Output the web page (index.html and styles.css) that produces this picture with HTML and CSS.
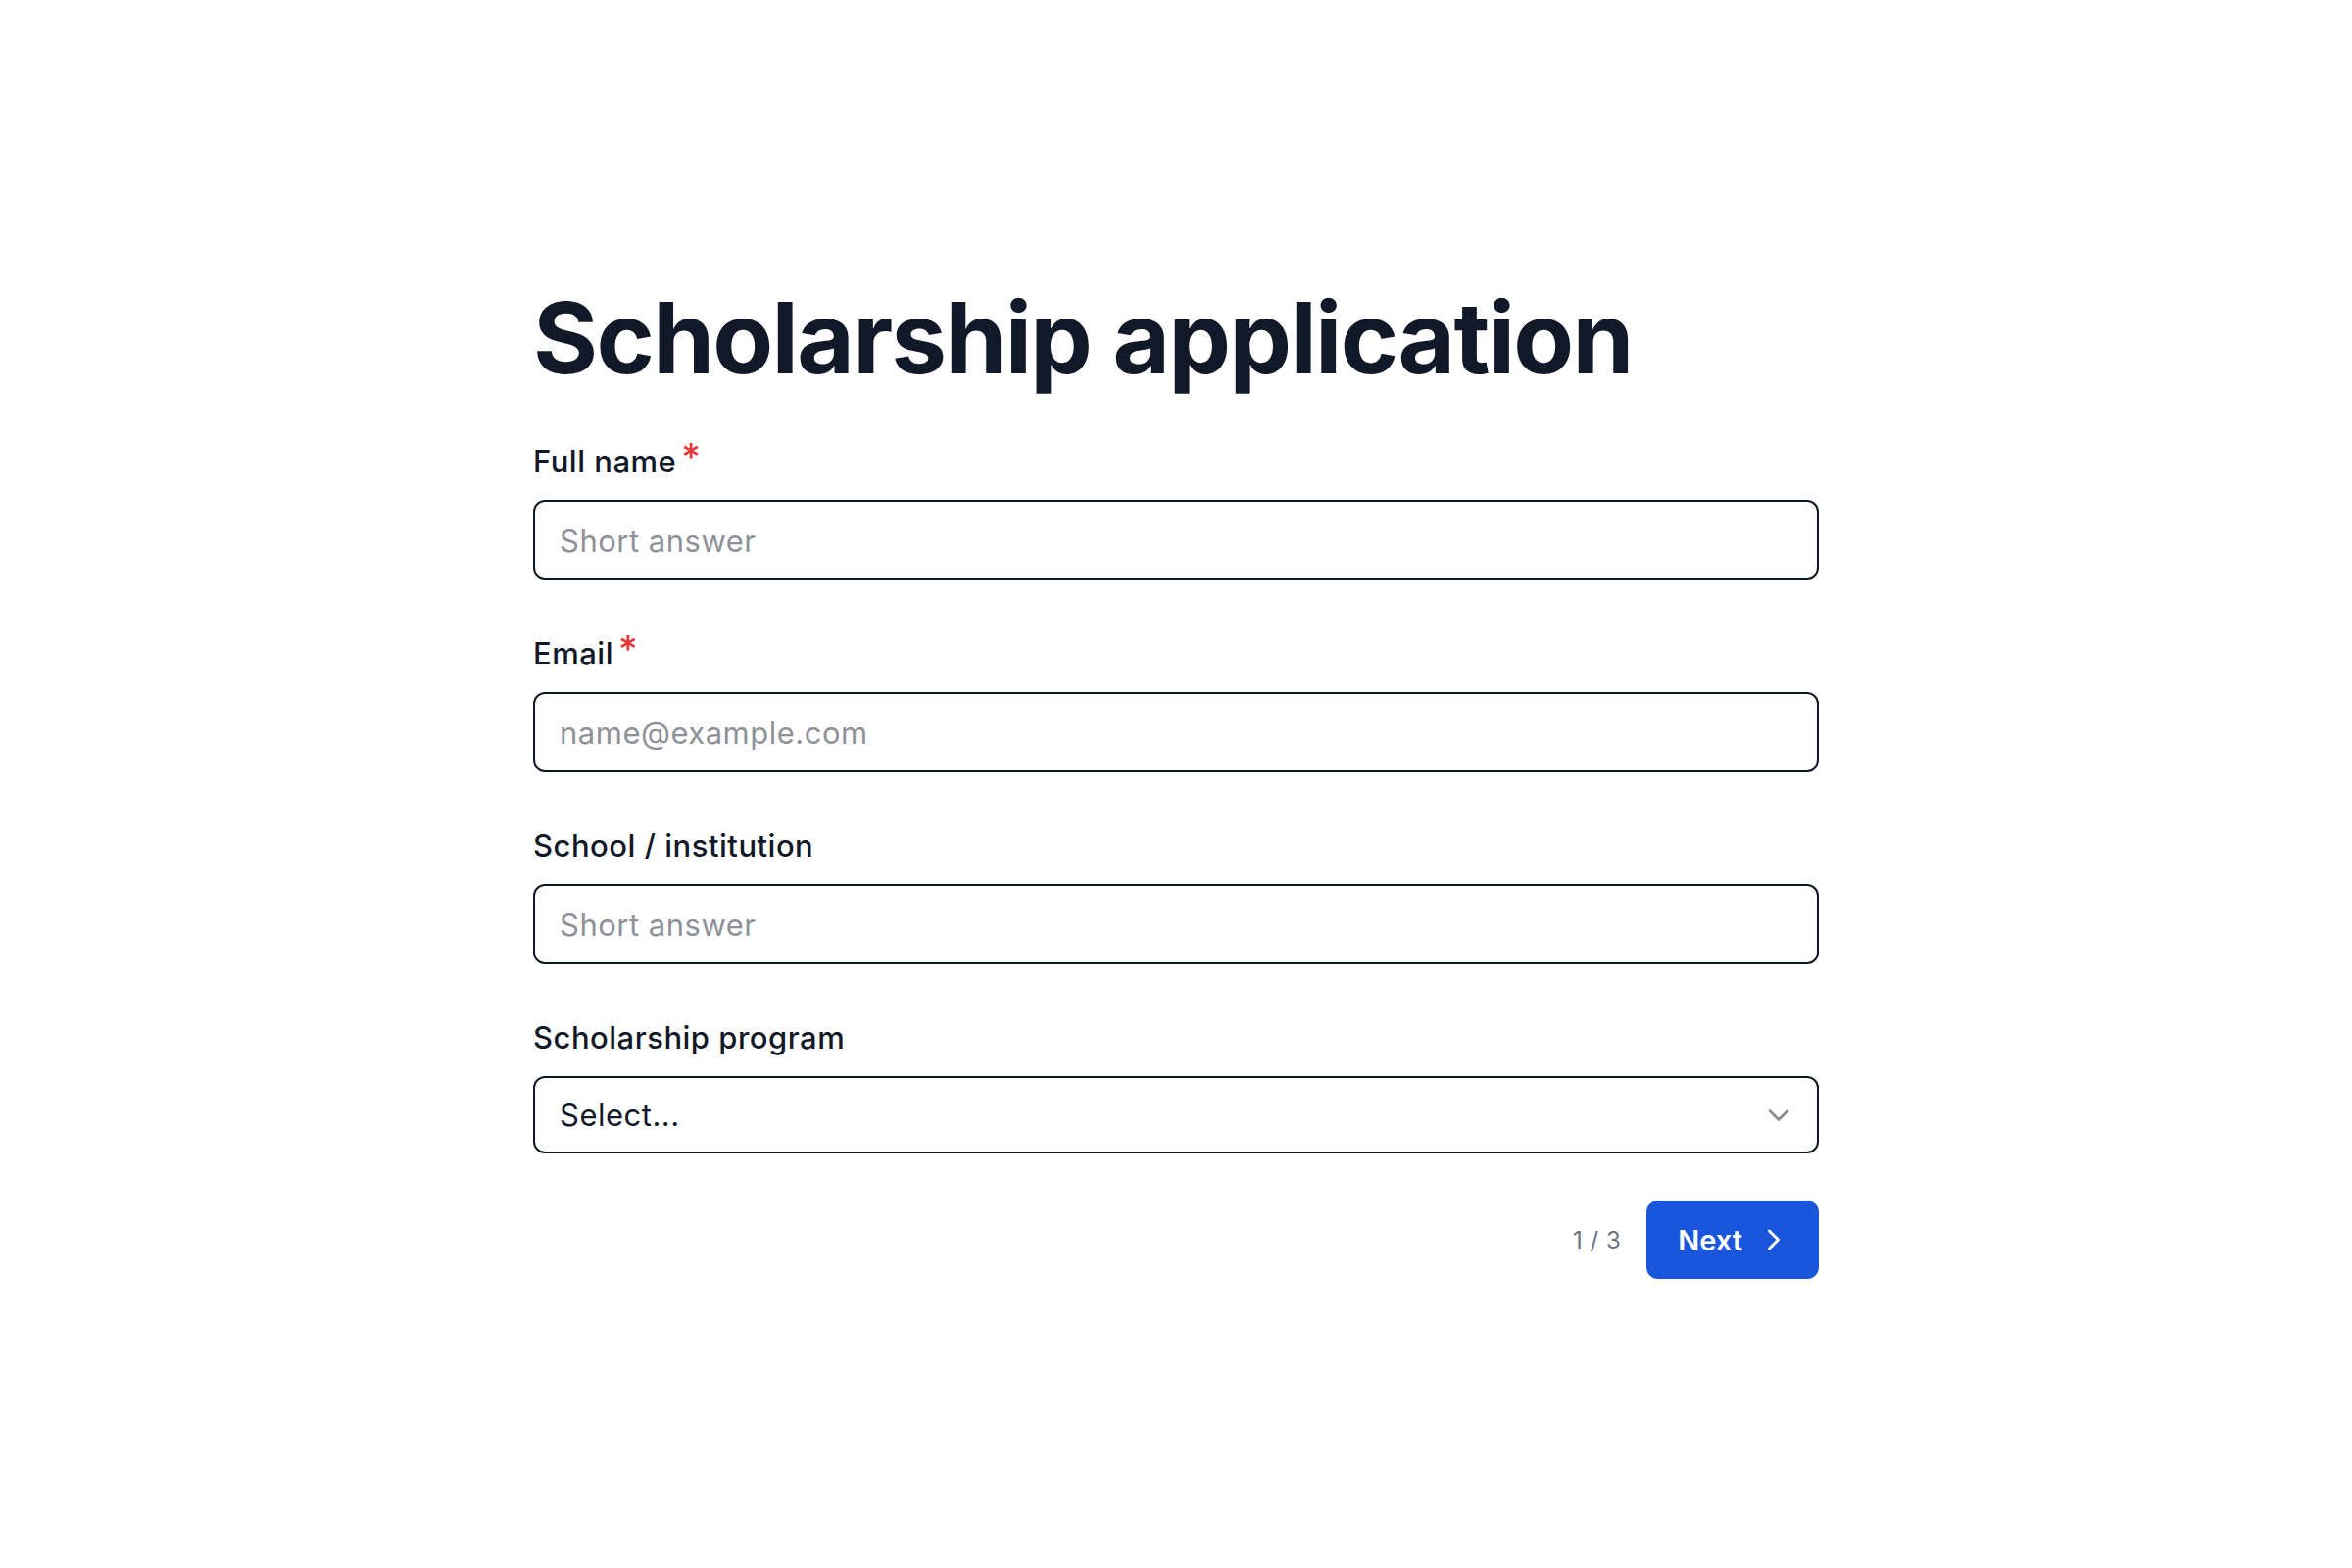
FILE: index.html
```html
<!DOCTYPE html>
<html lang="en">
<head>
<meta charset="utf-8">
<title>Scholarship application</title>
<link rel="stylesheet" href="styles.css">
</head>
<body>
<main class="page">
  <h1 class="title">Scholarship application</h1>
  <form class="form">
    <div class="field">
      <label class="label" for="fullname">Full name<span class="req">*</span></label>
      <input class="input" id="fullname" type="text" placeholder="Short answer">
    </div>
    <div class="field">
      <label class="label" for="email">Email<span class="req">*</span></label>
      <input class="input" id="email" type="email" placeholder="name@example.com">
    </div>
    <div class="field">
      <label class="label" for="school">School / institution</label>
      <input class="input" id="school" type="text" placeholder="Short answer">
    </div>
    <div class="field">
      <label class="label">Scholarship program</label>
      <div class="select">
        <span class="select-value">Select...</span>
        <svg class="select-chev" viewBox="0 0 24 24" width="36" height="36" fill="none" stroke="currentColor" stroke-width="1.7" stroke-linecap="round" stroke-linejoin="round"><path d="M6 9l6 6 6-6"/></svg>
      </div>
    </div>
    <div class="footer">
      <span class="step">1 / 3</span>
      <button class="next" type="button">
        <span>Next</span>
        <svg class="next-chev" viewBox="0 0 24 24" width="36" height="36" fill="none" stroke="currentColor" stroke-width="2" stroke-linecap="round" stroke-linejoin="round"><path d="M9 6l6 6-6 6"/></svg>
      </button>
    </div>
  </form>
</main>
</body>
</html>
```

FILE: styles.css
```css
* { box-sizing: border-box; }
html, body { margin: 0; padding: 0; background: #ffffff; }
body {
  font-family: Inter, "Noto Sans", "Liberation Sans", sans-serif;
  color: #111827;
}
.page {
  width: 1312px;
  margin: 0 auto;
  padding-top: 284px;
}
.title {
  margin: 0;
  font-size: 101px;
  line-height: 120px;
  font-weight: 700;
  letter-spacing: -1.7px;
  color: #111827;
}
.form {
  margin-top: 44px;
  display: flex;
  flex-direction: column;
  gap: 52px;
}
.field {
  display: flex;
  flex-direction: column;
  gap: 17px;
}
.label {
  font-size: 31px;
  line-height: 45px;
  font-weight: 500;
  letter-spacing: 0.5px;
  color: #111827;
}
.req {
  color: #e5383b;
  font-size: 38px;
  margin-left: 5px;
  vertical-align: 2px;
  line-height: 0;
}
.input {
  display: block;
  width: 100%;
  height: 82px;
  border: 2px solid #111827;
  border-radius: 12px;
  padding: 0 25px;
  font-family: inherit;
  font-size: 31px;
  letter-spacing: 0.5px;
  color: #111827;
  background: #fff;
  outline: none;
}
.input::placeholder { color: #8e9197; }
.select {
  height: 79px;
  border: 2px solid #111827;
  border-radius: 12px;
  padding: 0 21px 0 25px;
  display: flex;
  align-items: center;
  justify-content: space-between;
}
.select-value {
  font-size: 31px;
  letter-spacing: 0.5px;
  color: #111827;
}
.select-chev { color: #8a8a8a; display: block; }
.footer {
  margin-top: -4px;
  display: flex;
  justify-content: flex-end;
  align-items: center;
  gap: 26px;
}
.step {
  font-size: 24px;
  letter-spacing: 0.5px;
  color: #6b7280;
}
.next {
  height: 80px;
  border: 0;
  border-radius: 12px;
  background: #1a56db;
  color: #ffffff;
  font-family: inherit;
  font-size: 29px;
  font-weight: 600;
  padding: 0 28px 0 32px;
  display: flex;
  align-items: center;
  gap: 14px;
  cursor: pointer;
}
.next-chev { display: block; }
```
